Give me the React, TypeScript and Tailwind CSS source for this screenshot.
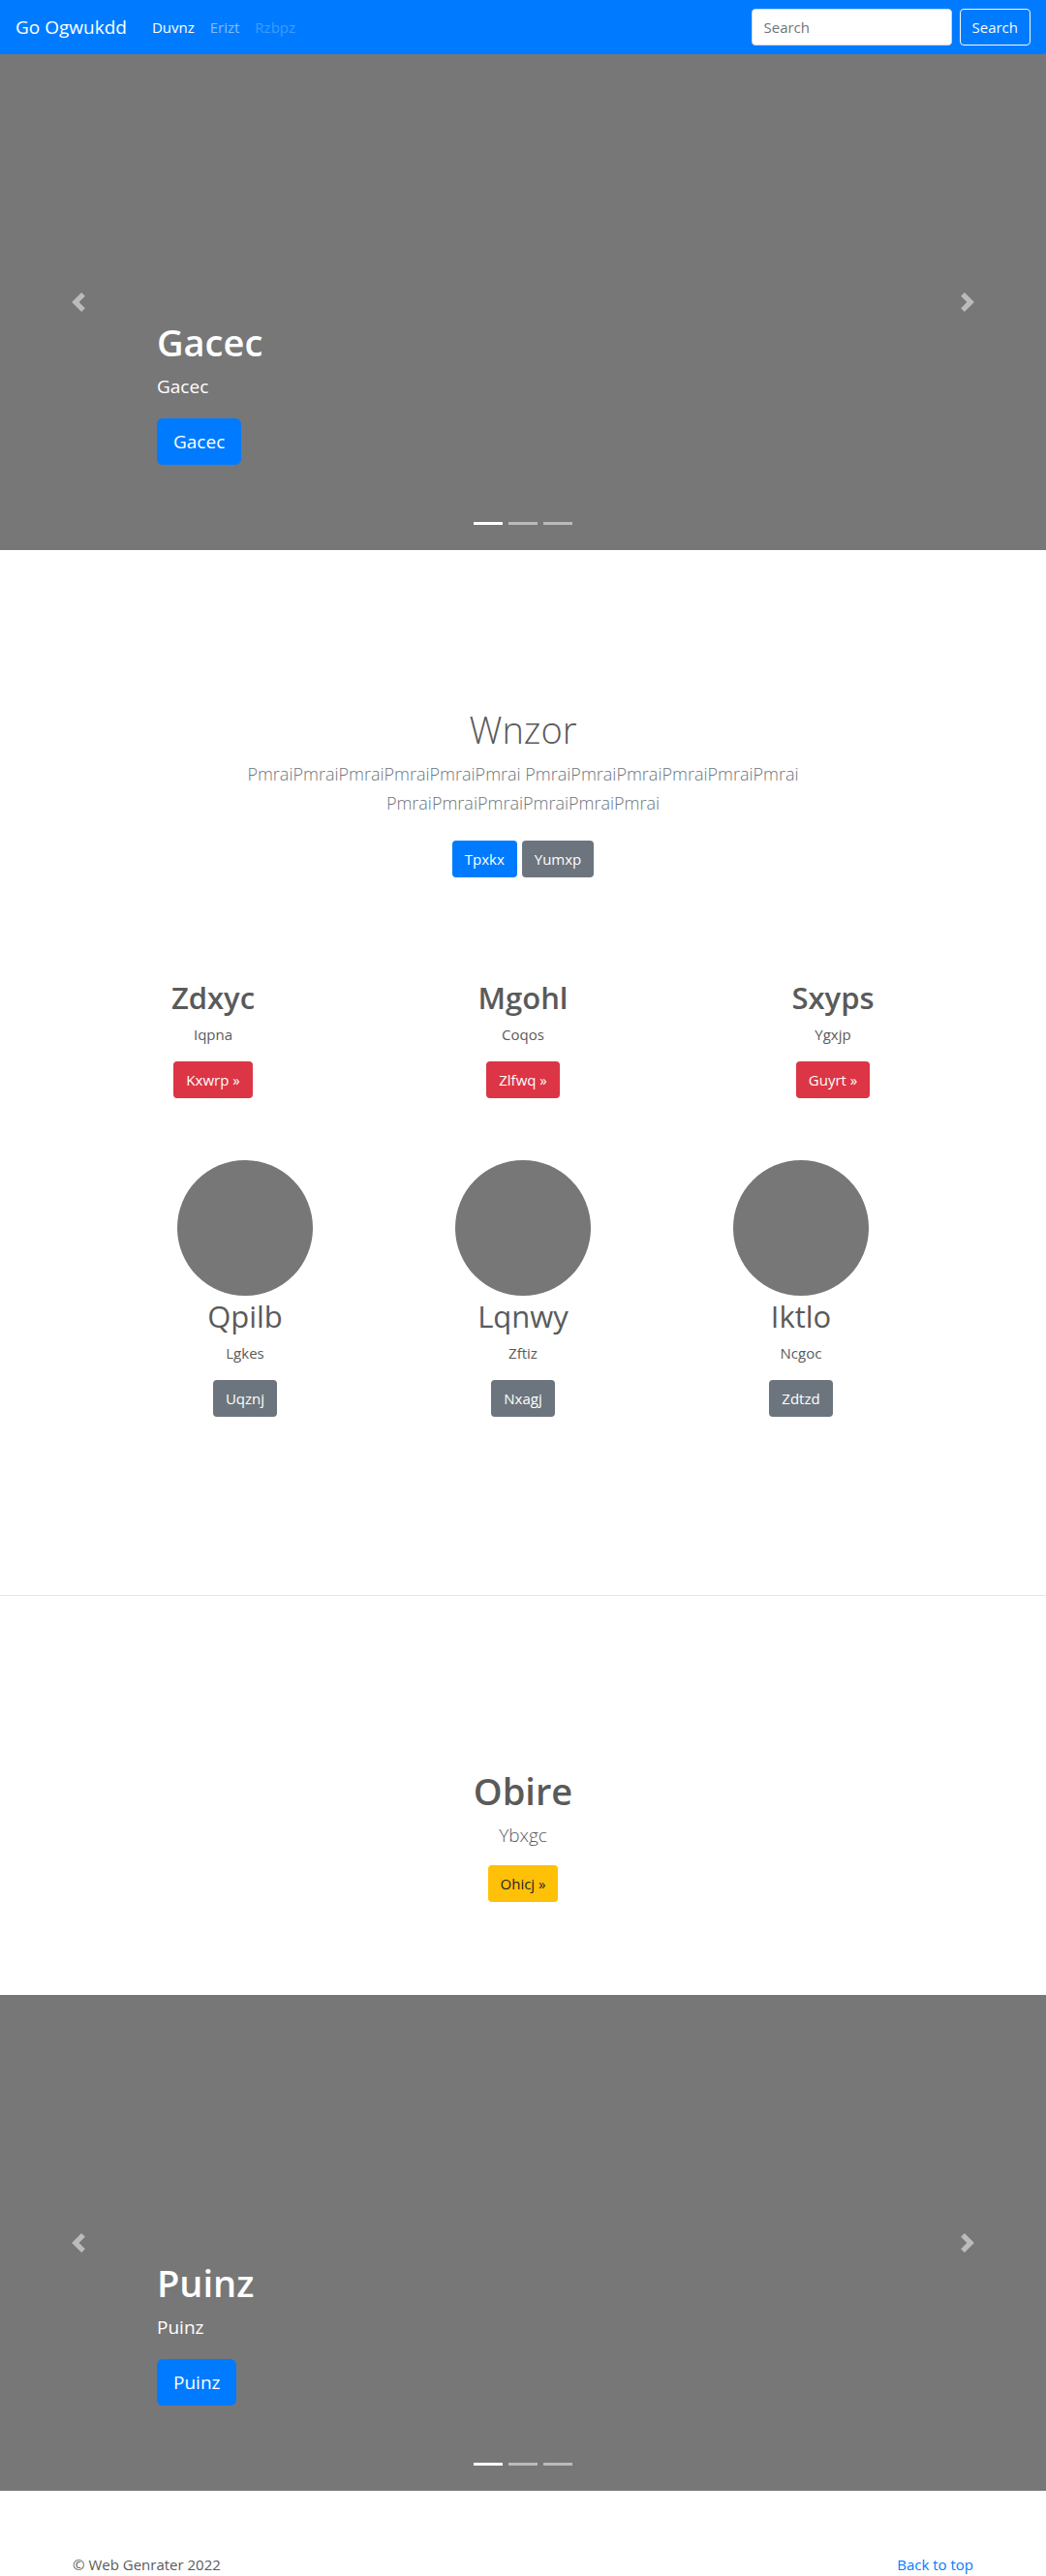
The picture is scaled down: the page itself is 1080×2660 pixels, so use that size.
import React from "react";

const button = "inline-block rounded px-[13px] py-[7px] text-[15px] leading-6";

type CarouselProps = { title: string; label: string };

function Carousel({ title, label }: CarouselProps) {
  return (
    <section aria-label={label} className="relative h-[512px] bg-[#777777] text-white">
      <div className="absolute inset-x-[15%] bottom-12 pb-5">
        <h2 className="mb-1.5 text-[38px] leading-[50px] font-semibold">{title}</h2>
        <p className="mb-[18px] text-[19px] leading-[30px]">{title}</p>
        <p className="mb-5 flex">
          <a href="#" className="rounded-md bg-[#007bff] px-[17px] py-[9px] text-[19px] leading-[30px]">
            {title}
          </a>
        </p>
      </div>
      <button type="button" aria-label="Previous" className="absolute inset-y-0 left-0 flex w-[15%] items-center justify-center opacity-50">
        <svg viewBox="0 0 8 8" className="size-5" fill="currentColor">
          <path d="M5.25 0l-4 4 4 4 1.5-1.5L4.25 4l2.5-2.5L5.25 0z" />
        </svg>
      </button>
      <button type="button" aria-label="Next" className="absolute inset-y-0 right-0 flex w-[15%] items-center justify-center opacity-50">
        <svg viewBox="0 0 8 8" className="size-5" fill="currentColor">
          <path d="M2.75 0l-1.5 1.5L3.75 4l-2.5 2.5L2.75 8l4-4-4-4z" />
        </svg>
      </button>
      <div className="absolute inset-x-[15%] bottom-[26px] flex justify-center gap-1.5">
        <button type="button" aria-label="Slide 1" className="h-[3px] w-[30px] bg-white" />
        <button type="button" aria-label="Slide 2" className="h-[3px] w-[30px] bg-white/50" />
        <button type="button" aria-label="Slide 3" className="h-[3px] w-[30px] bg-white/50" />
      </div>
    </section>
  );
}

const features = [
  { title: "Zdxyc", text: "Iqpna", action: "Kxwrp »" },
  { title: "Mgohl", text: "Coqos", action: "Zlfwq »" },
  { title: "Sxyps", text: "Ygxjp", action: "Guyrt »" },
];

const people = [
  { title: "Qpilb", text: "Lgkes", action: "Uqznj" },
  { title: "Lqnwy", text: "Zftiz", action: "Nxagj" },
  { title: "Iktlo", text: "Ncgoc", action: "Zdtzd" },
];

export default function App() {
  return (
    <div className="bg-white font-['Open_Sans','Noto_Sans',sans-serif] text-[15px] leading-6 text-[#5a5a5a]">
      <header>
        <nav className="flex h-14 items-center bg-[#007bff] px-4">
          <a href="#" className="mr-[26px] text-[19px] leading-[30px] text-white">Go Ogwukdd</a>
          <ul className="mr-auto flex gap-4">
            <li><a href="#" className="text-white">Duvnz</a></li>
            <li><a href="#" className="text-white/50">Erizt</a></li>
            <li><a href="#" aria-disabled="true" className="text-white/25">Rzbpz</a></li>
          </ul>
          <form className="flex gap-2" onSubmit={(e) => e.preventDefault()}>
            <input
              type="search"
              placeholder="Search"
              aria-label="Search"
              className="h-[38px] w-[207px] rounded border border-[#ced4da] bg-white px-3 text-[15px] text-[#495057] placeholder:text-[#6c757d]"
            />
            <button type="submit" className="h-[38px] rounded border border-[#f8f9fa] px-3 text-[#f8f9fa]">Search</button>
          </form>
        </nav>
      </header>

      <main>
        <Carousel title="Gacec" label="Featured" />

        <section className="mt-16 px-4 py-24 text-center">
          <h1 className="mb-1.5 text-[38px] leading-[50px] font-light">Wnzor</h1>
          <p className="mx-auto mb-4 max-w-[610px] text-[18px] leading-[30px] font-light text-[#6c757d]">
            PmraiPmraiPmraiPmraiPmraiPmrai PmraiPmraiPmraiPmraiPmraiPmrai PmraiPmraiPmraiPmraiPmraiPmrai
          </p>
          <p className="my-6 flex justify-center gap-[5px] text-white">
            <a href="#" className={`${button} bg-[#007bff]`}>Tpxkx</a>
            <a href="#" className={`${button} bg-[#6c757d]`}>Yumxp</a>
          </p>
        </section>

        <section className="mx-auto -mt-4 grid max-w-[960px] grid-cols-3 text-center">
          {features.map((item) => (
            <div key={item.title}>
              <h2 className="mb-1.5 text-[31px] leading-10 font-semibold">{item.title}</h2>
              <p className="mb-4">{item.text}</p>
              <a href="#" className={`${button} bg-[#dc3545] text-white`}>{item.action}</a>
            </div>
          ))}
        </section>

        <section className="mx-auto mt-16 grid max-w-[861px] grid-cols-3 text-center">
          {people.map((item) => (
            <div key={item.title}>
              <div className="mx-auto size-[140px] rounded-full bg-[#777777]" />
              <h2 className="mt-px mb-1.5 text-[31px] leading-10">{item.title}</h2>
              <p className="mb-4">{item.text}</p>
              <a href="#" className={`${button} bg-[#6c757d] text-white`}>{item.action}</a>
            </div>
          ))}
        </section>

        <hr className="mt-[184px] border-[#e5e5e5]" />

        <section className="pt-44 pb-24 text-center">
          <h2 className="mb-1.5 text-[38px] leading-[50px] font-semibold">Obire</h2>
          <p className="mb-4 text-[19px] leading-[30px] font-light">Ybxgc</p>
          <p className="flex justify-center">
            <a href="#" className={`${button} bg-[#ffc107] text-[#212529]`}>Ohicj »</a>
          </p>
        </section>

        <Carousel title="Puinz" label="More" />
      </main>

      <footer className="mx-[75px] mt-16 flex justify-between">
        <p>© Web Genrater 2022</p>
        <a href="#" className="text-[#007bff]">Back to top</a>
      </footer>
    </div>
  );
}
